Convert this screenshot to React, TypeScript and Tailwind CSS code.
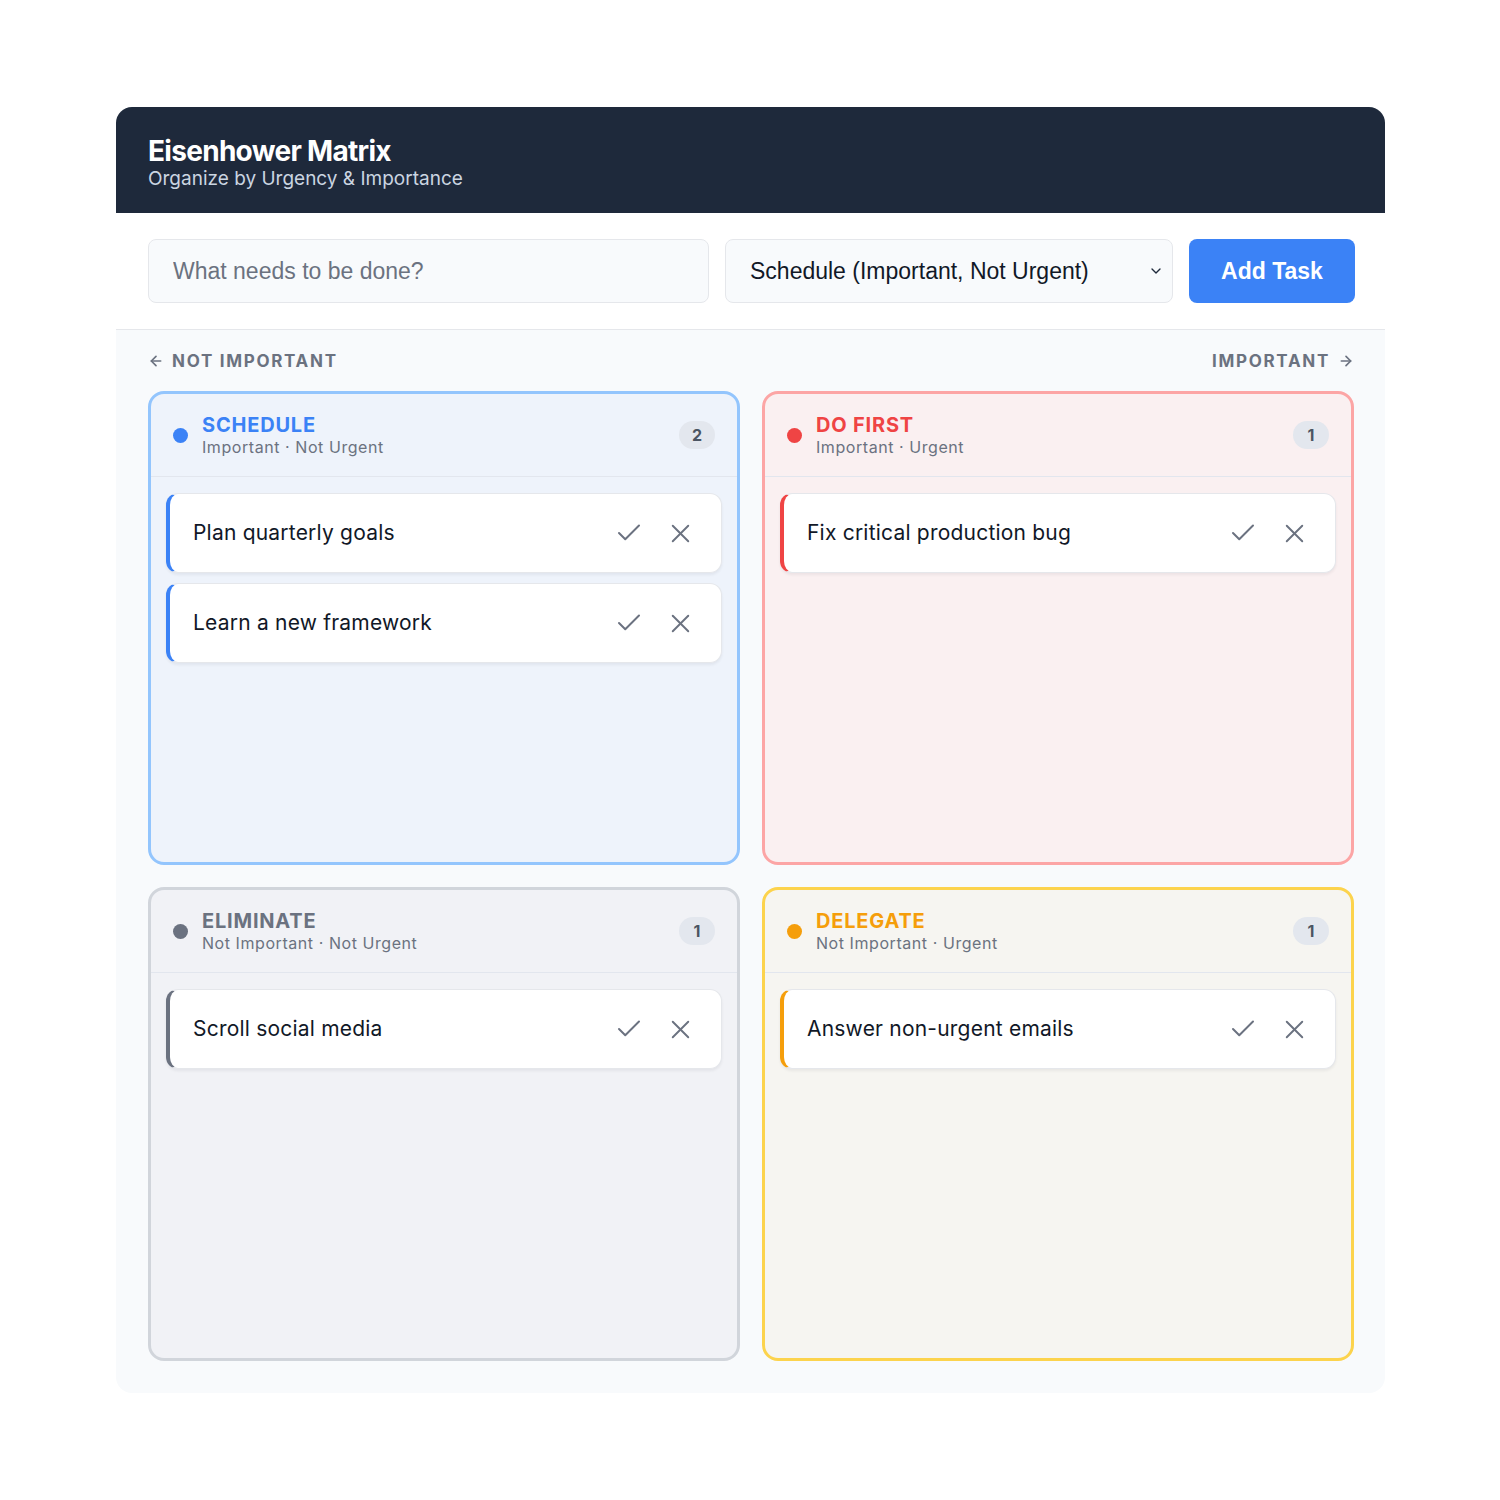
import React, { useState } from 'react';
import { Check, X, ChevronDown, ArrowLeft, ArrowRight } from 'lucide-react';

type QuadrantKey = 'schedule' | 'doFirst' | 'eliminate' | 'delegate';

type Task = { id: number; text: string; quadrant: QuadrantKey };

// Quadrant styles, in grid order (top-left, top-right, bottom-left, bottom-right)
const QUADRANTS: {
  key: QuadrantKey;
  title: string;
  subtitle: string;
  box: string;
  dot: string;
  titleColor: string;
  accent: string;
}[] = [
  {
    key: 'schedule',
    title: 'Schedule',
    subtitle: 'Important · Not Urgent',
    box: 'border-[#93c5fd] bg-[#eef3fb]',
    dot: 'bg-[#3b82f6]',
    titleColor: 'text-[#3b82f6]',
    accent: 'border-l-[#3b82f6]',
  },
  {
    key: 'doFirst',
    title: 'Do First',
    subtitle: 'Important · Urgent',
    box: 'border-[#fca5a5] bg-[#faf0f1]',
    dot: 'bg-[#ef4444]',
    titleColor: 'text-[#ef4444]',
    accent: 'border-l-[#ef4444]',
  },
  {
    key: 'eliminate',
    title: 'Eliminate',
    subtitle: 'Not Important · Not Urgent',
    box: 'border-[#d1d5db] bg-[#f1f2f6]',
    dot: 'bg-[#6b7280]',
    titleColor: 'text-[#6b7280]',
    accent: 'border-l-[#6b7280]',
  },
  {
    key: 'delegate',
    title: 'Delegate',
    subtitle: 'Not Important · Urgent',
    box: 'border-[#fcd34d] bg-[#f6f5f1]',
    dot: 'bg-[#f59e0b]',
    titleColor: 'text-[#f59e0b]',
    accent: 'border-l-[#f59e0b]',
  },
];

const INITIAL_TASKS: Task[] = [
  { id: 1, text: 'Plan quarterly goals', quadrant: 'schedule' },
  { id: 2, text: 'Learn a new framework', quadrant: 'schedule' },
  { id: 3, text: 'Fix critical production bug', quadrant: 'doFirst' },
  { id: 4, text: 'Scroll social media', quadrant: 'eliminate' },
  { id: 5, text: 'Answer non-urgent emails', quadrant: 'delegate' },
];

export default function App() {
  const [tasks, setTasks] = useState<Task[]>(INITIAL_TASKS);
  const [draft, setDraft] = useState('');
  const [target, setTarget] = useState<QuadrantKey>('schedule');

  const addTask = () => {
    if (!draft.trim()) return;
    setTasks([...tasks, { id: Date.now(), text: draft.trim(), quadrant: target }]);
    setDraft('');
  };

  const removeTask = (id: number) => setTasks(tasks.filter((t) => t.id !== id));

  return (
    <div className="min-h-[1500px] bg-white pt-[107px] font-['Inter',sans-serif]">
      <div className="ml-[116px] w-[1269px] overflow-hidden rounded-2xl bg-[#f8fafc]">
        {/* header */}
        <div className="h-[106px] bg-[#1e293b] px-8 pt-[27px]">
          <h1 className="text-[28px] font-bold leading-[34px] tracking-[-0.025em] text-white">Eisenhower Matrix</h1>
          <p className="text-[19px] leading-[22px] text-[#cbd5e1]">Organize by Urgency &amp; Importance</p>
        </div>

        {/* new task form */}
        <div className="flex gap-4 border-b border-[#e5e7eb] bg-white pl-8 pr-[30px] py-[26px] font-['Liberation_Sans',Arial,sans-serif]">
          <input
            value={draft}
            onChange={(e) => setDraft(e.target.value)}
            placeholder="What needs to be done?"
            className="h-16 flex-1 rounded-lg border border-[#e5e7eb] bg-[#f8fafc] px-6 text-[23px] text-[#111827] outline-none placeholder:text-[#6b7280]"
          />
          <div className="relative w-[448px]">
            <select
              value={target}
              onChange={(e) => setTarget(e.target.value as QuadrantKey)}
              className="h-16 w-full appearance-none rounded-lg border border-[#e5e7eb] bg-[#f8fafc] px-6 text-[23px] text-[#111827] outline-none"
            >
              <option value="doFirst">Do First (Important, Urgent)</option>
              <option value="schedule">Schedule (Important, Not Urgent)</option>
              <option value="delegate">Delegate (Not Important, Urgent)</option>
              <option value="eliminate">Eliminate (Not Important, Not Urgent)</option>
            </select>
            <ChevronDown size={16} strokeWidth={2} className="pointer-events-none absolute right-[9px] top-1/2 -translate-y-1/2 text-[#1e293b]" />
          </div>
          <button
            onClick={addTask}
            className="h-16 w-[166px] rounded-lg bg-[#3b82f6] text-[23px] font-bold text-white"
          >
            Add Task
          </button>
        </div>

        {/* matrix */}
        <div className="pl-8 pr-[31px] pb-[32px] pt-[21px]">
          <div className="mb-[20px] flex items-center justify-between text-[17px] font-bold uppercase leading-5 tracking-[0.1em] text-[#6b7280]">
            <span className="flex items-center gap-[8px]">
              <ArrowLeft size={16} strokeWidth={2.5} />
              Not Important
            </span>
            <span className="flex items-center gap-[8px]">
              Important
              <ArrowRight size={16} strokeWidth={2.5} />
            </span>
          </div>

          <div className="grid grid-cols-2 gap-[22px]">
            {QUADRANTS.map((q) => {
              const list = tasks.filter((t) => t.quadrant === q.key);
              return (
                <div key={q.key} className={`flex h-[474px] flex-col rounded-2xl border-[3px] ${q.box}`}>
                  <div className="flex items-center justify-between border-b border-[#e2e6ee] px-[22px] py-[19px]">
                    <div className="flex items-center gap-[14px]">
                      <span className={`h-[15px] w-[15px] rounded-full ${q.dot}`} />
                      <div>
                        <div className={`text-[20px] font-bold uppercase leading-6 tracking-[0.04em] ${q.titleColor}`}>{q.title}</div>
                        <div className="text-[16px] leading-5 tracking-[0.035em] text-[#6b7280]">{q.subtitle}</div>
                      </div>
                    </div>
                    <span className="flex h-7 w-9 items-center justify-center rounded-full bg-[#e3e7ee] text-[16px] font-bold text-[#4b5563]">
                      {list.length}
                    </span>
                  </div>

                  <div className="flex flex-col gap-[10px] px-[15px] pt-[16px]">
                    {list.map((t) => (
                      <div
                        key={t.id}
                        className={`flex h-[80px] items-center justify-between rounded-xl border border-[#e5e7eb] border-l-4 bg-white pl-[23px] pr-[21px] shadow-[0_2px_3px_rgba(15,23,42,0.06)] ${q.accent}`}
                      >
                        <span className="text-[21px] tracking-[0.01em] text-[#111827]">{t.text}</span>
                        <div className="flex items-center gap-[11px] text-[#6b7280]">
                          <button onClick={() => removeTask(t.id)} className="flex h-10 w-10 items-center justify-center">
                            <Check size={30} strokeWidth={1.6} />
                          </button>
                          <button onClick={() => removeTask(t.id)} className="flex h-10 w-10 items-center justify-center">
                            <X size={31} strokeWidth={1.5} />
                          </button>
                        </div>
                      </div>
                    ))}
                  </div>
                </div>
              );
            })}
          </div>
        </div>
      </div>
    </div>
  );
}
